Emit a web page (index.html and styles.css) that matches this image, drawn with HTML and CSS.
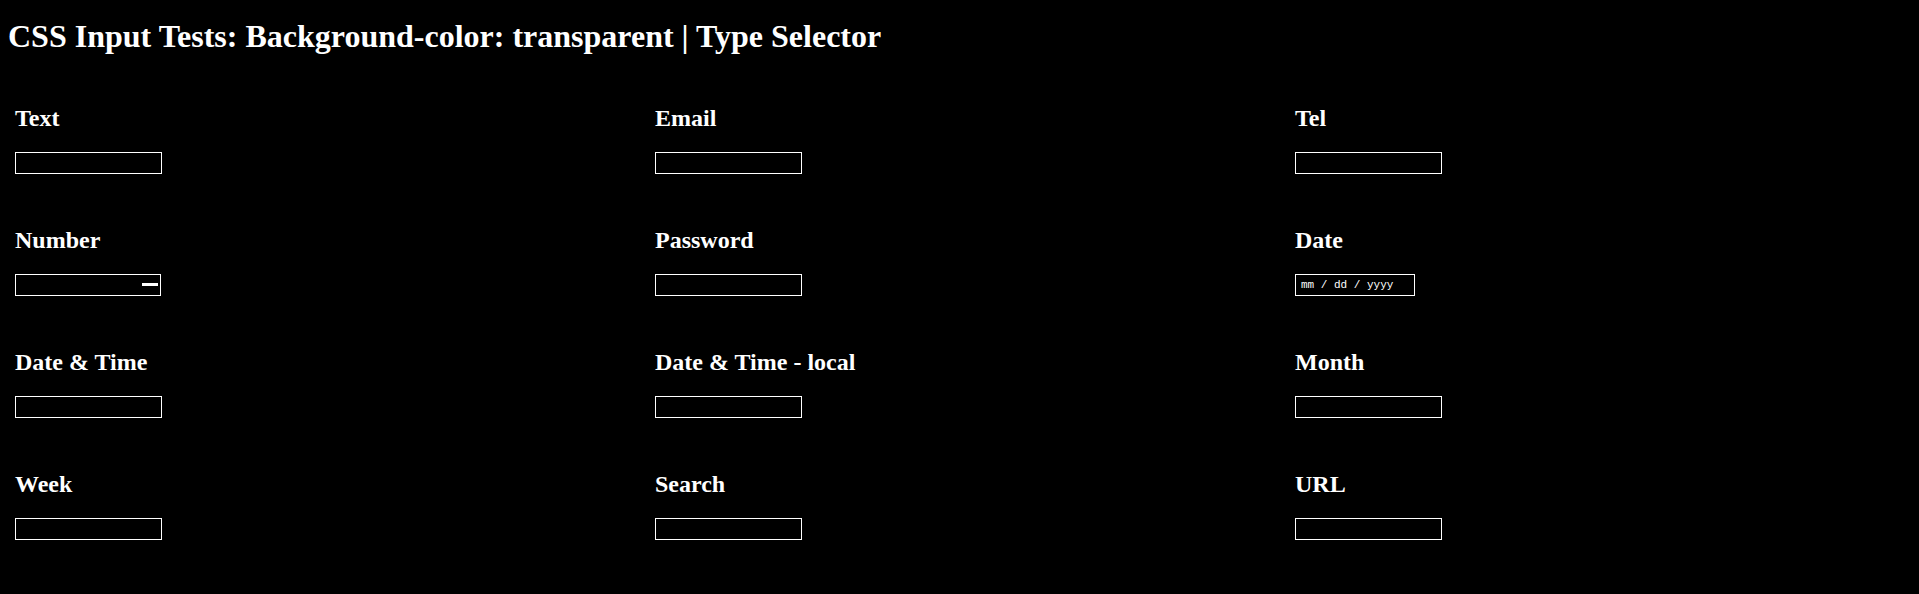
FILE: index.html
```html
<!DOCTYPE html>
<html lang="en">
<head>
<meta charset="utf-8">
<title>CSS Input Tests: Background-color: transparent | Type Selector</title>
<link rel="stylesheet" href="styles.css">
</head>
<body>
<h1 class="title">CSS Input Tests: Background-color: transparent | Type Selector</h1>
<div class="grid">
  <div class="cell"><h2 class="label">Text</h2><input class="field" type="text"></div>
  <div class="cell"><h2 class="label">Email</h2><input class="field" type="email"></div>
  <div class="cell"><h2 class="label">Tel</h2><input class="field" type="tel"></div>

  <div class="cell"><h2 class="label">Number</h2><span class="num-wrap"><input class="field field-number" type="number"></span></div>
  <div class="cell"><h2 class="label">Password</h2><input class="field" type="password"></div>
  <div class="cell"><h2 class="label">Date</h2><input class="field field-date" type="text" placeholder="mm / dd / yyyy"></div>

  <div class="cell"><h2 class="label">Date &amp; Time</h2><input class="field" type="text"></div>
  <div class="cell"><h2 class="label">Date &amp; Time - local</h2><input class="field" type="text"></div>
  <div class="cell"><h2 class="label">Month</h2><input class="field" type="text"></div>

  <div class="cell"><h2 class="label">Week</h2><input class="field" type="text"></div>
  <div class="cell"><h2 class="label">Search</h2><input class="field" type="search"></div>
  <div class="cell"><h2 class="label">URL</h2><input class="field" type="url"></div>
</div>
</body>
</html>
```
FILE: styles.css
```css
html, body {
  background: #000;
}
body {
  margin: 0;
  padding: 18px 0 0 8px;
  color: #fff;
  font-family: "Liberation Serif", "Times New Roman", serif;
}
.title {
  margin: 0;
  font-size: 32px;
  line-height: 37px;
  font-weight: bold;
}
.grid {
  display: grid;
  grid-template-columns: repeat(3, 640px);
  row-gap: 53px;
  margin-top: 50px;
  padding-left: 7px;
}
.cell {
  display: flex;
  flex-direction: column;
  align-items: flex-start;
}
.label {
  margin: 0 0 20px;
  font-size: 24px;
  line-height: 27px;
  font-weight: bold;
}
.field {
  display: block;
  box-sizing: border-box;
  width: 147px;
  height: 22px;
  margin: 0;
  padding: 0 4px;
  border: 1px solid #fff;
  border-radius: 0;
  background-color: transparent;
  color: #fff;
  font-family: "Liberation Sans", Arial, sans-serif;
  font-size: 13px;
  outline: none;
}
.field-number {
  width: 146px;
  -moz-appearance: textfield;
  appearance: textfield;
}
.field-number::-webkit-inner-spin-button,
.field-number::-webkit-outer-spin-button {
  -webkit-appearance: none;
  margin: 0;
}
.num-wrap {
  position: relative;
  display: block;
}
.num-wrap::after {
  content: "";
  position: absolute;
  left: 127px;
  top: 9px;
  width: 16px;
  height: 3px;
  background: #fff;
}
.field-date {
  width: 120px;
  padding: 0 5px;
  font-family: "Liberation Mono", "Courier New", monospace;
  font-size: 11px;
}
.field-date::placeholder {
  color: #fff;
  opacity: 1;
}
```
